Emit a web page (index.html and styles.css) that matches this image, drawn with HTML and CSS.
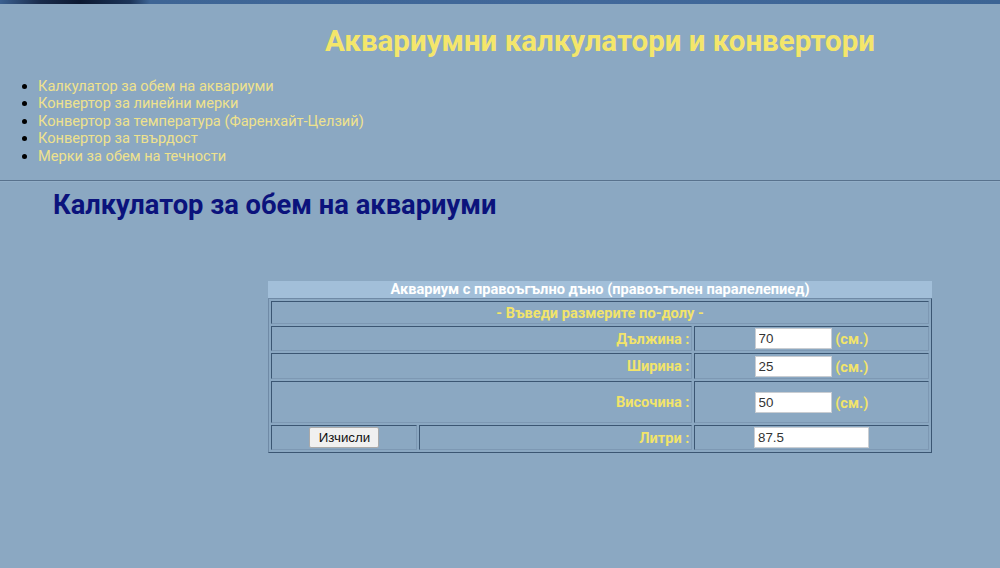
FILE: index.html
```html
<!DOCTYPE html>
<html lang="bg">
<head>
<meta charset="utf-8">
<title>Аквариумни калкулатори и конвертори</title>
<link rel="stylesheet" href="styles.css">
</head>
<body>
<div class="topbar"></div>
<header class="header">
  <h1 class="site-title">Аквариумни калкулатори и конвертори</h1>
  <ul class="nav">
    <li><a href="#">Калкулатор за обем на аквариуми</a></li>
    <li><a href="#">Конвертор за линейни мерки</a></li>
    <li><a href="#">Конвертор за температура (Фаренхайт-Целзий)</a></li>
    <li><a href="#">Конвертор за твърдост</a></li>
    <li><a href="#">Мерки за обем на течности</a></li>
  </ul>
</header>
<div class="rule"></div>
<main class="main">
  <h2 class="page-title">Калкулатор за обем на аквариуми</h2>
  <div class="calc-wrap">
    <table class="calc">
      <caption class="calc-caption">Аквариум с правоъгълно дъно (правоъгълен паралелепиед)</caption>
      <colgroup>
        <col class="c1"><col class="c2"><col class="c3">
      </colgroup>
      <tr class="row-sub"><td colspan="3" class="sub">- Въведи размерите по-долу -</td></tr>
      <tr class="row-a"><td colspan="2" class="label">Дължина :</td><td class="val"><input class="num" type="text" value="70"> <span class="unit">(см.)</span></td></tr>
      <tr class="row-b"><td colspan="2" class="label">Ширина :</td><td class="val"><input class="num" type="text" value="25"> <span class="unit">(см.)</span></td></tr>
      <tr class="row-tall"><td colspan="2" class="label">Височина :</td><td class="val"><input class="num" type="text" value="50"> <span class="unit">(см.)</span></td></tr>
      <tr class="row-last"><td class="btn-cell"><button class="btn" type="button">Изчисли</button></td><td class="label">Литри :</td><td class="val"><input class="res" type="text" value="87.5"></td></tr>
    </table>
  </div>
</main>
</body>
</html>
```
FILE: styles.css
```css
html, body {
  margin: 0;
  padding: 0;
}
body {
  background: #8ba8c2;
  font-family: Roboto, "Liberation Sans", Arial, sans-serif;
  width: 1000px;
  height: 568px;
  overflow: hidden;
}
.topbar {
  height: 4px;
  background: linear-gradient(90deg, #3b6090 0px, #1a2c4c 40px, #0c1830 80px, #1c3458 130px, #3e6595 150px, #41689a 600px, #3c6494 1000px);
}
.header {
  padding-top: 20px;
}
.site-title {
  margin: 0 0 0 200px;
  text-align: center;
  font-size: 29.5px;
  font-weight: 700;
  line-height: 34px;
  color: #f4e66b;
}
.nav {
  margin: 20px 0 0 0;
  padding-left: 38px;
  font-size: 14.6px;
  line-height: 17.4px;
  color: #000;
}
.nav a {
  color: #efe28d;
  text-decoration: none;
}
.rule {
  margin-top: 15px;
  height: 1px;
  background: #58728d;
  border-bottom: 1px solid #93afc8;
}
.main {
  padding-top: 8px;
}
.page-title {
  margin: 0 0 0 53px;
  font-size: 27.3px;
  line-height: 31px;
  font-weight: 700;
  color: #0b137c;
}
.calc-wrap {
  margin: 60px 0 0 200px;
  display: flex;
  justify-content: center;
}
.calc {
  width: 663px;
  table-layout: fixed;
  border-collapse: separate;
  border-spacing: 2px;
  border: 1px solid;
  border-color: #6f8aa6 #3b5672 #3b5672 #6f8aa6;
  font-size: 14.6px;
  font-weight: 700;
}
.calc-caption {
  background: #a2bfd9;
  color: #ffffff;
  font-size: 14.6px;
  line-height: 17px;
  margin-bottom: 0;
}
.c1 { width: 146px; }
.c2 { width: 273px; }
.c3 { width: 234px; }
.calc td {
  border: 1px solid;
  border-color: #3b5672 #7d98b3 #7d98b3 #3b5672;
  padding: 0 2px;
  color: #f2e46a;
  line-height: 16px;
}
.row-sub { height: 23px; }
.row-a { height: 25px; }
.row-b { height: 26px; }
.row-tall { height: 42px; }
.row-last { height: 25px; }
.sub { text-align: center; }
.label { text-align: right; }
.val, .btn-cell { text-align: center; }
.num, .res {
  box-sizing: border-box;
  height: 21px;
  border: 1px solid #c9cdd2;
  background: #fff;
  font-family: "Liberation Sans", Arial, sans-serif;
  font-size: 13.33px;
  color: #333;
  padding: 1px 3px;
  vertical-align: middle;
  margin: 0;
}
.num { width: 77px; }
.res { width: 115px; }
.unit {
  vertical-align: middle;
}
.btn {
  box-sizing: border-box;
  width: 70px;
  height: 21px;
  padding: 0;
  background: #f0f0f0;
  border: 1px solid #a9a9a9;
  border-radius: 2px;
  font-family: "Liberation Sans", Arial, sans-serif;
  font-size: 13.33px;
  color: #111;
  vertical-align: middle;
}
```
